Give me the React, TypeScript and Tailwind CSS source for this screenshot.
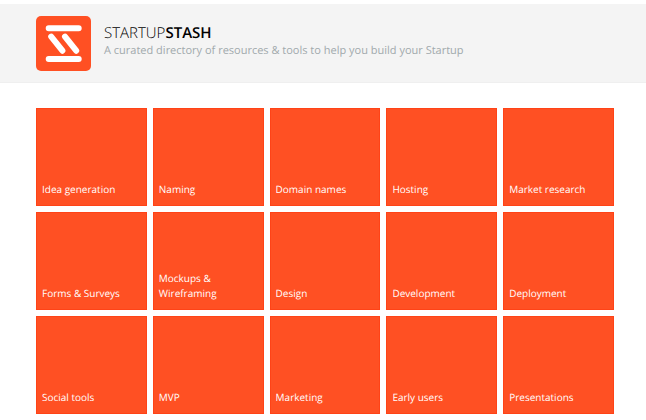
const categories = [
  "Idea generation",
  "Naming",
  "Domain names",
  "Hosting",
  "Market research",
  "Forms & Surveys",
  "Mockups & Wireframing",
  "Design",
  "Development",
  "Deployment",
  "Social tools",
  "MVP",
  "Marketing",
  "Early users",
  "Presentations",
];

function Logo() {
  return (
    <svg viewBox="0 0 55 55" className="size-[55px] shrink-0" aria-hidden="true">
      <rect width="55" height="55" rx="5" fill="#ff5023" />
      <g stroke="#fff" strokeWidth="6" strokeLinecap="round">
        <path d="M12.7 12.3H42.7M12.7 43H42.7" />
        <path d="M15.2 20.7L26.4 34.7M29 20.7L40.2 34.7" />
      </g>
    </svg>
  );
}

export default function App() {
  return (
    <div className="bg-white pt-1 font-['Open_Sans',sans-serif] [text-rendering:geometricPrecision]">
      <header className="flex gap-[13px] border-b border-[#efefef] bg-[#f4f4f4] pt-3 pr-8 pb-[11px] pl-9">
        <Logo />
        <div className="pt-2">
          <h1 className="text-[15px] leading-[18px] font-light text-black">
            STARTUP<span className="font-semibold">STASH</span>
          </h1>
          <p className="text-[11px] leading-[18px] text-[#a1a9ac]">
            A curated directory of resources & tools to help you build your Startup
          </p>
        </div>
      </header>
      <main className="grid grid-cols-5 gap-[6px] pt-[25px] pr-8 pb-6 pl-9">
        {categories.map((name) => (
          <a
            key={name}
            href="#"
            className="flex h-[98px] items-end border border-[#ff4317] bg-[#ff5023] px-[5px] pb-2 text-[10px] leading-[15px] font-medium text-white"
          >
            {name}
          </a>
        ))}
      </main>
    </div>
  );
}
